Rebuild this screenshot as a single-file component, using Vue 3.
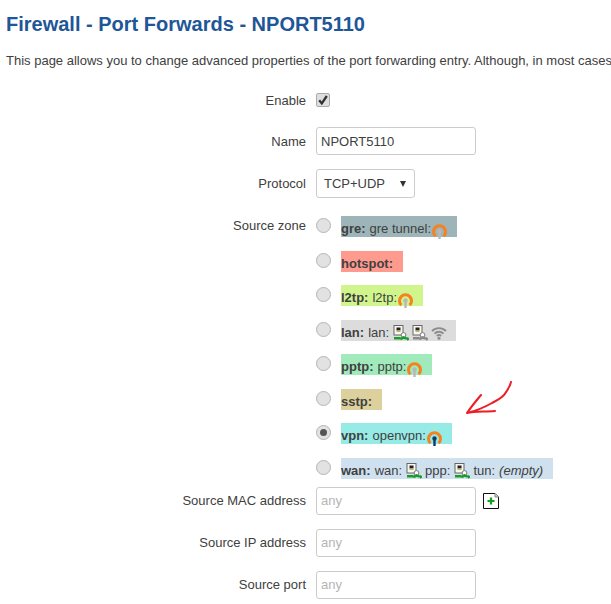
<template>
  <div class="page">
    <svg class="defs" width="0" height="0">
      <symbol id="eth" viewBox="0 0 16 16">
        <rect x="1" y="0.5" width="9" height="9.5" fill="#f6f6f2" stroke="#666" />
        <rect x="3.5" y="2.5" width="4" height="3" fill="#222" />
        <rect x="3.5" y="5.5" width="4" height="1.5" fill="#c9b458" />
        <circle cx="10.5" cy="10" r="2.4" fill="#fff" stroke="#777" />
        <path d="M1 13.2h5.5l2 .6 2-1.4 2 1h2l1 1.6" fill="none" stroke="currentColor" stroke-width="2.4" />
      </symbol>
      <symbol id="wifi" viewBox="0 0 16 14">
        <g fill="none" stroke="#8c8c8c" stroke-width="1.9">
          <path d="M1 5a10 10 0 0 1 14 0" />
          <path d="M3.5 7.6a6.4 6.4 0 0 1 9 0" />
          <path d="M5.8 10a3.2 3.2 0 0 1 4.4 0" />
        </g>
        <circle cx="8" cy="12.3" r="1.5" fill="#8c8c8c" />
      </symbol>
    </svg>

    <h2 class="title">Firewall - Port Forwards - NPORT5110</h2>
    <p class="intro">This page allows you to change advanced properties of the port forwarding entry. Although, in most cases</p>

    <div class="row row-enable">
      <label class="lbl">Enable</label>
      <span class="check">
        <svg width="10" height="10" viewBox="0 0 10 10"><path d="M1.2 5.2 3.8 8.4 8.8 1" fill="none" stroke="#333" stroke-width="2.3" /></svg>
      </span>
    </div>

    <div class="row row-name">
      <label class="lbl">Name</label>
      <input class="field" type="text" value="NPORT5110" />
    </div>

    <div class="row">
      <label class="lbl">Protocol</label>
      <div class="select">TCP+UDP<span class="caret"></span></div>
    </div>

    <div class="row row-zones">
      <label class="lbl">Source zone</label>
      <div class="zones">
        <div v-for="zone in zones" :key="zone.name" class="zone">
          <span class="radio" :class="{ on: zone.checked }"></span>
          <span class="tag" :style="{ background: zone.color }">
            <b>{{ zone.name }}:</b>
            <template v-for="(part, i) in zone.parts" :key="i">
              <span v-if="part.text" class="part">{{ part.text }}</span>
              <i v-else-if="part.em" class="part">{{ part.em }}</i>
              <svg v-else-if="part.icon === 'eth'" class="ico" :class="{ off: part.off }" width="16" height="16"><use href="#eth" /></svg>
              <svg v-else-if="part.icon === 'wifi'" class="ico wifi" width="16" height="14"><use href="#wifi" /></svg>
              <svg v-else class="tun" width="15" height="15" viewBox="0 0 15 15">
                <path d="M3.4 12.2A6 6 0 1 1 11.6 12.2" fill="none" stroke="#f5811f" stroke-width="3" />
                <circle cx="7.5" cy="7.5" r="2.2" :fill="part.tunnel" />
                <path d="M7.5 8.5v6.5" :stroke="part.tunnel" stroke-width="2.4" />
              </svg>
            </template>
          </span>
        </div>
      </div>
    </div>

    <div class="row row-mac">
      <label class="lbl">Source MAC address</label>
      <input class="field" type="text" placeholder="any" />
      <svg class="add" width="16" height="16" viewBox="0 0 16 16">
        <path d="M.5 .5H12L15.5 4V15.5H.5Z" fill="#fff" stroke="#111" />
        <path d="M12 .5V4H15.5" fill="#ccc" stroke="#888" />
        <path d="M8 4.5v7M4.5 8h7" stroke="#13a01e" stroke-width="2.2" />
      </svg>
    </div>
    <div class="row">
      <label class="lbl">Source IP address</label>
      <input class="field" type="text" placeholder="any" />
    </div>
    <div class="row">
      <label class="lbl">Source port</label>
      <input class="field" type="text" placeholder="any" />
    </div>

    <svg class="arrow" width="60" height="44" viewBox="0 0 60 44">
      <path d="M46 1C45 6 41 11 39 14C35 18 31 20 27 22C20 26 10 30 2 32M2 32C6 26 11 20 16 14M2 32C10 30 20 31 30 30" fill="none" stroke="#ee1c25" stroke-width="2" stroke-linecap="round" />
    </svg>
  </div>
</template>

<script setup>
const zones = [
  { name: 'gre', color: '#9db5b8', parts: [{ text: 'gre tunnel:' }, { tunnel: '#b8b8b8' }] },
  { name: 'hotspot', color: '#ff9a8f', parts: [] },
  { name: 'l2tp', color: '#cff58c', parts: [{ text: 'l2tp:' }, { tunnel: '#b8b8b8' }] },
  { name: 'lan', color: '#dcdcdc', parts: [{ text: 'lan:' }, { icon: 'eth' }, { icon: 'eth', off: true }, { icon: 'wifi' }] },
  { name: 'pptp', color: '#a0eabb', parts: [{ text: 'pptp:' }, { tunnel: '#b8b8b8' }] },
  { name: 'sstp', color: '#dcd09c', parts: [] },
  { name: 'vpn', color: '#97ebe7', checked: true, parts: [{ text: 'openvpn:' }, { tunnel: '#12396b' }] },
  { name: 'wan', color: '#cfe0ef', parts: [{ text: 'wan:' }, { icon: 'eth' }, { text: 'ppp:' }, { icon: 'eth' }, { text: 'tun:' }, { em: '(empty)' }] },
]
</script>

<style>
html, body { margin: 0; background: #fff; overflow: hidden; }
</style>

<style scoped>
.page {
  position: relative;
  width: 611px;
  height: 604px;
  overflow: hidden;
  font-family: "Liberation Sans", Arial, sans-serif;
  font-size: 13px;
  color: #404040;
}
.defs { position: absolute; }
.title {
  margin: 0;
  padding: 12px 0 0 6px;
  font-size: 20px;
  line-height: 24px;
  font-weight: bold;
  color: #1e5697;
}
.intro {
  margin: 0;
  padding: 16px 0 0 6px;
  line-height: 17px;
  white-space: nowrap;
}
.row {
  display: flex;
  align-items: center;
  height: 28px;
  margin-top: 14px;
}
.row-enable { margin-top: 17px; }
.row-name { margin-top: 13px; }
.lbl {
  width: 306px;
  margin-right: 10px;
  text-align: right;
  flex: none;
}
.check {
  width: 14px;
  height: 14px;
  box-sizing: border-box;
  border: 1px solid #aaa;
  border-radius: 2px;
  background: #dedede;
  display: flex;
  align-items: center;
  justify-content: center;
}
.field {
  width: 160px;
  height: 28px;
  box-sizing: border-box;
  padding: 0 4px;
  border: 1px solid #ccc;
  border-radius: 3px;
  font: inherit;
  color: #404040;
  outline: none;
}
.field::placeholder { color: #b5b5b5; }
.select {
  position: relative;
  width: 99px;
  height: 29px;
  line-height: 27px;
  box-sizing: border-box;
  padding-left: 7px;
  border: 1px solid #ccc;
  border-radius: 3px;
}
.caret {
  position: absolute;
  right: 8px;
  top: 11px;
  border-left: 3.5px solid transparent;
  border-right: 3.5px solid transparent;
  border-top: 6px solid #333;
}
.row-zones {
  height: auto;
  align-items: flex-start;
  margin-top: 19px;
}
.row-zones .lbl { padding-top: 2px; }
.zones { display: flex; flex-direction: column; }
.zone {
  display: flex;
  height: 34.5px;
  align-items: flex-start;
}
.zone:last-child { height: 21px; }
.row-mac { margin-top: 8px; }
.radio {
  width: 13px;
  height: 13px;
  margin: 2px 10px 0 0;
  border: 1px solid #b5b5b5;
  border-radius: 50%;
  background: #e2e2e2;
  flex: none;
  position: relative;
}
.radio.on::after {
  content: "";
  position: absolute;
  left: 3px;
  top: 3px;
  width: 7px;
  height: 7px;
  border-radius: 50%;
  background: #555;
}
.tag {
  display: flex;
  align-items: flex-start;
  height: 21px;
  box-sizing: border-box;
  padding: 5px 6px 0 0;
  line-height: 16px;
  white-space: nowrap;
}
.tag b { margin-right: 4px; }
.part { margin-right: 4px; }
.ico { margin: 0 3px 0 0; color: #1a9c2a; flex: none; }
.ico.off { color: #888; }
.ico.wifi { margin-top: 1px; }
.tun { margin: 3px 4px 0 -3px; flex: none; }
.add { margin-left: 7px; }
.arrow { position: absolute; left: 465px; top: 381px; }
</style>
